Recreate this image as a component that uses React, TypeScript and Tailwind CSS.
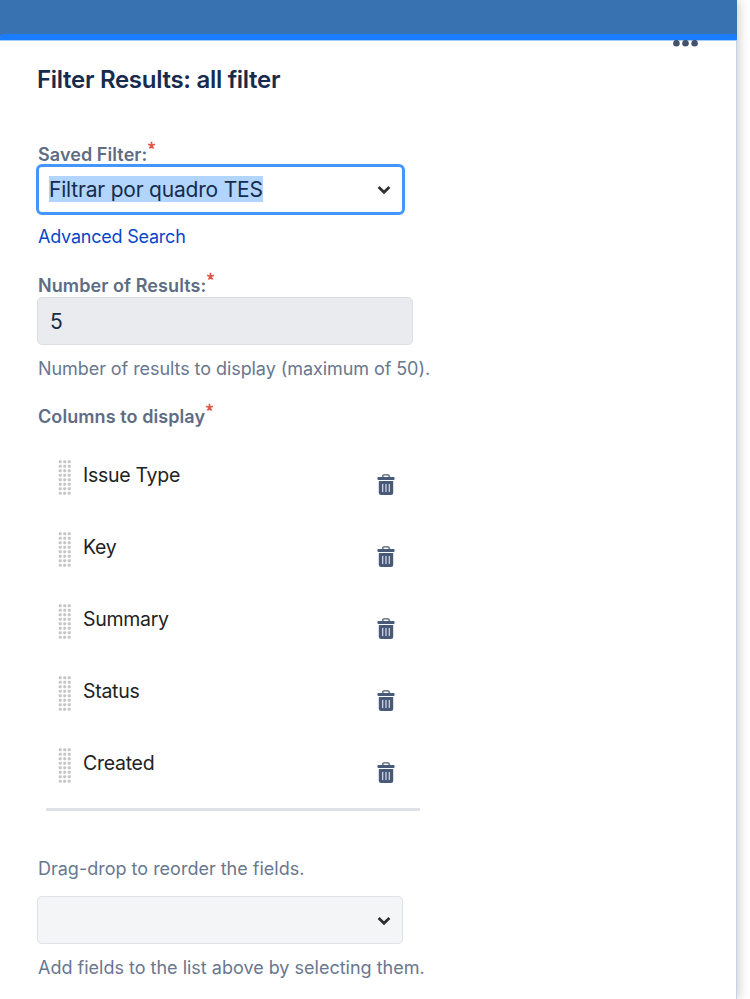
import { useState } from "react";

const columns = ["Issue Type", "Key", "Summary", "Status", "Created"];

function Required() {
  return (
    <svg className="-mt-[3px] h-[9px] w-[9px]" viewBox="0 0 9 9" aria-label="required">
      <path
        d="M4.5 0.8V4.5M4.5 4.5L1.1 3.3M4.5 4.5L7.9 3.3M4.5 4.5L2.4 7.6M4.5 4.5L6.6 7.6"
        fill="none"
        stroke="#e0584a"
        strokeWidth="1.7"
      />
    </svg>
  );
}

function Chevron() {
  return (
    <svg className="h-[10px] w-[14px]" viewBox="0 0 14 10">
      <path d="M1.6 2.1L7 7.2L12.4 2.1" fill="none" stroke="#2f2f2f" strokeWidth="2.8" />
    </svg>
  );
}

function DragHandle() {
  const rows = [0, 1, 2, 3, 4, 5, 6, 7];
  return (
    <svg className="h-[36px] w-[14px]" viewBox="0 0 14 36">
      {rows.map((row) =>
        [0, 1, 2].map((col) => (
          <rect
            key={`${row}-${col}`}
            x={0.7 + col * 4.5}
            y={0.2 + row * 4.5}
            width="3"
            height="3"
            rx="1"
            fill="#c6c6c6"
          />
        ))
      )}
    </svg>
  );
}

function TrashIcon() {
  return (
    <svg className="h-[22px] w-[18px]" viewBox="0 0 18 22">
      <path d="M5.8 3.2V2.1Q5.8 0.9 7 0.9H11Q12.2 0.9 12.2 2.1V3.2" fill="none" stroke="#485a78" strokeWidth="1.3" />
      <rect x="0.5" y="2.9" width="17" height="3.1" rx="0.8" fill="#485a78" />
      <path d="M1.8 7H16.2V18.8Q16.2 21 14 21H4Q1.8 21 1.8 18.8Z" fill="#485a78" />
      <path d="M5.7 10V18M9 10V18M12.3 10V18" stroke="#d5dce4" strokeWidth="1.2" />
    </svg>
  );
}

function Label({ text }: { text: string }) {
  return (
    <div className="flex h-5 items-start text-[18px] leading-[22px] font-semibold tracking-[0.08px] whitespace-nowrap text-[#5e6c84]">
      <span>{text}</span>
      <Required />
    </div>
  );
}

function App() {
  const [items, setItems] = useState(columns);

  return (
    <div className="h-[999px] w-[750px] overflow-hidden bg-white font-['Inter','Liberation_Sans',sans-serif]">
      <main className="h-full w-[737px] border-r border-[#c3d3e8] bg-white shadow-[2px_0_10px_rgba(0,0,0,0.2)]">
        <header className="h-[34px] w-[737px] bg-[#3872b1]" />
        <div className="h-[7px] w-[737px] bg-linear-to-b from-[#3872b1] from-50% to-white to-50%">
          <div className="h-full rounded-t-[4px] border-b border-[#a5cdfb] bg-[#1a7cff]" />
        </div>

        <div className="-mt-px flex h-6 justify-end pr-[38px]">
          <svg className="h-[7px] w-[25px]" viewBox="0 0 25 7">
            <circle cx="3.4" cy="3.2" r="3.3" fill="#42526e" />
            <circle cx="12.5" cy="3.2" r="3.3" fill="#42526e" />
            <circle cx="21.6" cy="3.2" r="3.3" fill="#42526e" />
          </svg>
        </div>

        <div className="pl-[38px]">
          <h1 className="-ml-px h-8 text-[24px] leading-[32px] font-semibold tracking-[-0.3px] text-[#172b4d]">
            Filter Results: all filter
          </h1>

          <div className="mt-12">
            <Label text="Saved Filter:" />
          </div>
          <div className="-ml-[2px] flex h-[51px] w-[369px] items-center justify-between rounded-[6px] border-3 border-[#4496fb] px-[11px]">
            <span className="-mt-px -ml-px h-[26px] bg-[#b1d5fd] text-[21px] leading-[28px] tracking-[-0.2px] whitespace-nowrap text-[#172b4d]">
              Filtrar por quadro TES
            </span>
            <Chevron />
          </div>
          <a href="#" className="mt-[10px] block h-6 text-[18px] leading-6 tracking-[-0.22px] text-[#0747c9]">
            Advanced Search
          </a>

          <div className="mt-[26px] mb-[2px]">
            <Label text="Number of Results:" />
          </div>
          <div className="-ml-px flex h-12 w-[375.5px] items-center rounded-[5px] border border-[#dcdee3] bg-[#eaebef] pt-px pl-3 text-[21px] text-[#172b4d]">
            5
          </div>
          <p className="mt-[11px] h-6 text-[18px] leading-[25px] tracking-[-0.07px] text-[#69778f]">
            Number of results to display (maximum of 50).
          </p>

          <div className="mt-[26px]">
            <Label text="Columns to display" />
          </div>

          <ul className="mt-[22px] ml-[8px] w-[374px] border-b-3 border-[#dfe1e6]">
            {items.map((item) => (
              <li key={item} className="flex h-[72px] items-start pt-3 pr-[25px] pl-3">
                <DragHandle />
                <span className="ml-[11px] text-[19.5px] leading-[30px] tracking-[-0.28px] text-[#222]">{item}</span>
                <button
                  className="mt-[14px] ml-auto"
                  aria-label={`Remove ${item}`}
                  onClick={() => setItems(items.filter((i) => i !== item))}
                >
                  <TrashIcon />
                </button>
              </li>
            ))}
          </ul>

          <p className="mt-[45px] h-6 text-[18px] leading-[26px] text-[#69778f]">
            Drag-drop to reorder the fields.
          </p>
          <div className="-ml-px mt-4 flex h-12 w-[366px] items-center justify-end rounded-[5px] border border-[#dfe1e6] bg-[#f4f5f7] pt-px pr-[11px]">
            <Chevron />
          </div>
          <p className="mt-[11px] h-6 text-[18px] leading-[26px] text-[#69778f]">
            Add fields to the list above by selecting them.
          </p>
        </div>
      </main>
    </div>
  );
}

export default App;
